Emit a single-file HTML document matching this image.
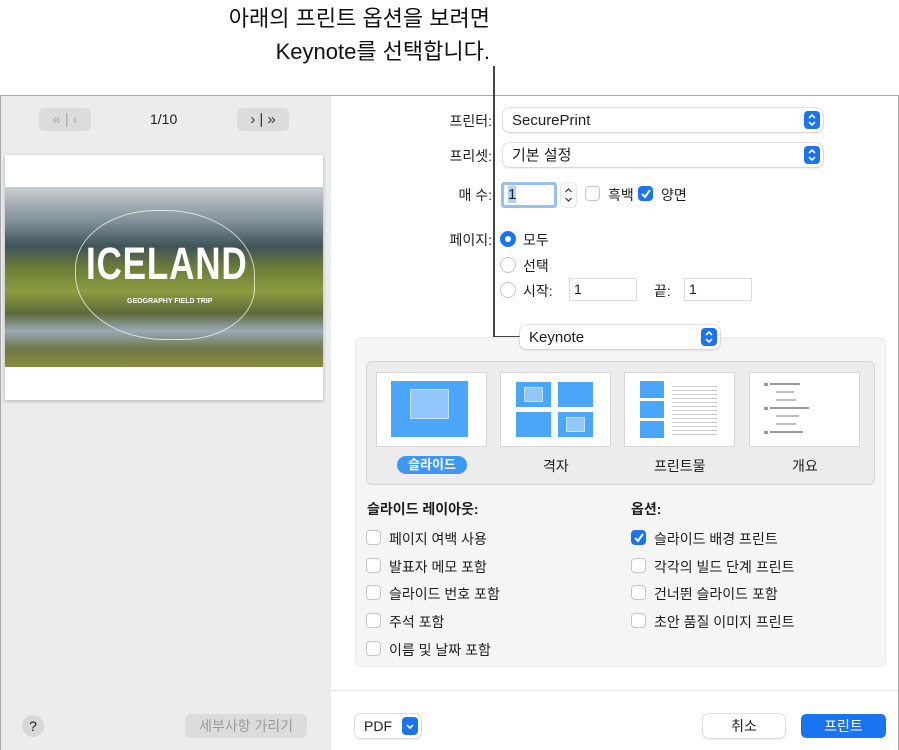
<!DOCTYPE html><html><head><meta charset="utf-8"><style>
*{box-sizing:border-box;margin:0;padding:0}
body{width:899px;height:750px;background:#fff;font-family:"Liberation Sans","Noto Sans CJK KR",sans-serif;color:#1d1d1d;position:relative;overflow:hidden;font-size:14px}
.a{position:absolute}
.lbl{position:absolute;font-size:14px;text-align:right}
.pop{position:absolute;background:#fff;border-radius:6px;box-shadow:0 0 0 0.5px #c8c8c8,0 1px 2px rgba(0,0,0,.15);font-size:15px;padding-left:9px;line-height:25px}
.arr{position:absolute;right:3px;top:3px;width:16px;height:18px;background:#1a73f0;border-radius:4px}
.arr svg{position:absolute;left:3px;top:2px}
.cb{position:absolute;width:15px;height:15px;border:1px solid #c5c5c5;border-radius:4px;background:#fff}
.cb.on{background:#1a73f0;border-color:#1a73f0}
.rd{position:absolute;width:16px;height:16px;border-radius:50%;border:1px solid #c5c5c5;background:#fff}
.t{position:absolute;font-size:14px;white-space:nowrap}
.thumb{position:absolute;top:373px;width:109px;height:73px;background:#fff;box-shadow:0 0 0 1px #d6d6d6}
.bl{position:absolute;background:#4aa6f8}
.lb{position:absolute;background:#93c7fb;border:1px solid #c4e1fd}
</style></head><body>
<div class="a" style="right:409px;top:2px;font-size:22px;text-align:right;line-height:33px;color:#111;white-space:nowrap">아래의 프린트 옵션을 보려면<br>Keynote를 선택합니다.</div>
<div class="a" style="left:0;top:95px;width:899px;height:655px;border:1px solid #a8a8a8;border-bottom:none"></div>
<div class="a" style="left:1px;top:96px;width:330px;height:654px;background:#ececec"></div>
<div class="a" style="left:39px;top:108px;width:52px;height:23px;background:#dcdcdc;border-radius:5px;color:#aaa;font-size:15px;line-height:23px;text-align:center">«&nbsp;|&nbsp;‹</div>
<div class="a" style="left:150px;top:111px;font-size:14px">1/10</div>
<div class="a" style="left:237px;top:108px;width:52px;height:23px;background:#dcdcdc;border-radius:5px;color:#333;font-size:15px;line-height:23px;text-align:center">›&nbsp;|&nbsp;»</div>
<div class="a" style="left:5px;top:155px;width:318px;height:245px;background:#fff;box-shadow:0 1px 4px rgba(0,0,0,.25)"></div>
<div class="a" style="left:5px;top:187px;width:318px;height:180px;background:linear-gradient(180deg,#c9ced1 0%,#7d8c95 20%,#3f5358 33%,#6c7d39 45%,#8b9c40 58%,#5e6a3a 70%,#9aa9b4 80%,#6e7748 90%,#8c8b3c 100%)"></div>
<div class="a" style="left:75px;top:210px;width:180px;height:130px;border:1px solid rgba(255,255,255,.7);border-radius:45% 50% 40% 50%"></div>
<div class="a" style="left:86px;top:238px;font-size:45px;font-weight:bold;color:#fff;letter-spacing:1px;transform:scaleX(.78);transform-origin:left;font-family:'Liberation Sans Narrow','Liberation Sans',sans-serif">ICELAND</div>
<div class="a" style="left:127px;top:298px;font-size:7px;font-weight:bold;color:#fff">GEOGRAPHY FIELD TRIP</div>
<div class="a" style="left:22px;top:715px;width:22px;height:22px;border-radius:50%;background:#d8d8d8;text-align:center;line-height:22px;font-size:14px">?</div>
<div class="a" style="left:185px;top:714px;width:122px;height:24px;background:#dcdcdc;border-radius:5px;color:#9a9a9a;text-align:center;line-height:24px;font-size:14px">세부사항 가리기</div>
<div class="a" style="left:493px;top:66px;width:2px;height:272px;background:#444"></div>
<div class="a" style="left:493px;top:336px;width:28px;height:2px;background:#444"></div>

<div class="lbl" style="left:420px;width:72px;top:111px">프린터:</div>
<div class="pop" style="left:503px;top:108px;width:320px;height:24px">SecurePrint<div class="arr"><svg width="10" height="14"><path d="M2 5l3-3 3 3M2 9l3 3 3-3" stroke="#fff" stroke-width="1.6" fill="none"/></svg></div></div>
<div class="lbl" style="left:420px;width:72px;top:146px">프리셋:</div>
<div class="pop" style="left:503px;top:143px;width:320px;height:24px">기본 설정<div class="arr"><svg width="10" height="14"><path d="M2 5l3-3 3 3M2 9l3 3 3-3" stroke="#fff" stroke-width="1.6" fill="none"/></svg></div></div>
<div class="lbl" style="left:420px;width:72px;top:185px">매 수:</div>
<div class="a" style="left:501px;top:182px;width:56px;height:26px;border:3px solid #93c0f5;border-radius:3px;background:#fff;font-size:15px;padding-left:4px;line-height:20px"><span style="background:#b3d4fb">1</span></div>
<div class="a" style="left:561px;top:183px;width:15px;height:24px;border-radius:4px;box-shadow:0 0 0 .5px #ccc"><svg width="15" height="24"><path d="M4.5 9l3-3 3 3M4.5 15l3 3 3-3" stroke="#333" stroke-width="1.2" fill="none"/></svg></div>
<div class="cb" style="left:585px;top:186px"></div><div class="t" style="left:608px;top:185px">흑백</div>
<div class="cb on" style="left:638px;top:186px"><svg width="14" height="14" style="position:absolute;left:0;top:0"><path d="M3 7l3 3 5-7" stroke="#fff" stroke-width="2" fill="none"/></svg></div><div class="t" style="left:661px;top:185px">양면</div>
<div class="lbl" style="left:420px;width:72px;top:230px">페이지:</div>
<div class="rd" style="left:500px;top:231px;border:5px solid #1a73f0"></div><div class="t" style="left:523px;top:230px">모두</div>
<div class="rd" style="left:500px;top:257px"></div><div class="t" style="left:523px;top:256px">선택</div>
<div class="rd" style="left:500px;top:282px"></div><div class="t" style="left:523px;top:281px">시작:</div>
<div class="a" style="left:569px;top:278px;width:68px;height:23px;border:1px solid #ddd;background:#fff;padding-left:4px;line-height:21px;font-size:14px">1</div>
<div class="t" style="left:654px;top:281px">끝:</div>
<div class="a" style="left:684px;top:278px;width:68px;height:23px;border:1px solid #ddd;background:#fff;padding-left:4px;line-height:21px;font-size:14px">1</div>

<div class="a" style="left:355px;top:337px;width:531px;height:330px;background:#f5f5f5;border-radius:6px;border:1px solid #ebebeb"></div>
<div class="pop" style="left:520px;top:325px;width:200px;height:24px;z-index:2">Keynote<div class="arr"><svg width="10" height="14"><path d="M2 5l3-3 3 3M2 9l3 3 3-3" stroke="#fff" stroke-width="1.6" fill="none"/></svg></div></div>
<div class="a" style="left:366px;top:361px;width:509px;height:124px;background:#ececec;border:1px solid #d6d6d6;border-radius:6px"></div>
<div class="thumb" style="left:377px"><div class="bl" style="left:14px;top:8px;width:77px;height:56px"></div><div class="lb" style="left:33px;top:16px;width:39px;height:30px"></div></div>
<div class="thumb" style="left:501px"><div class="bl" style="left:15px;top:9px;width:35px;height:25px"></div><div class="lb" style="left:23px;top:14px;width:19px;height:15px"></div><div class="bl" style="left:57px;top:9px;width:35px;height:25px"></div><div class="bl" style="left:15px;top:39px;width:35px;height:25px"></div><div class="bl" style="left:57px;top:39px;width:35px;height:25px"></div><div class="lb" style="left:65px;top:44px;width:19px;height:15px"></div></div>
<div class="thumb" style="left:625px"><div class="bl" style="left:15px;top:8px;width:24px;height:17px"></div><div class="bl" style="left:15px;top:28px;width:24px;height:17px"></div><div class="bl" style="left:15px;top:48px;width:24px;height:17px"></div><div class="a" style="left:47px;top:10px;width:45px;height:54px;background:repeating-linear-gradient(#fff 0,#fff 3px,#ccc 3px,#ccc 4px)"></div></div>
<div class="thumb" style="left:750px"><div class="a" style="left:14px;top:10px;width:4px;height:3px;background:#999"></div><div class="a" style="left:20px;top:10px;width:30px;height:2px;background:#999"></div><div class="a" style="left:26px;top:18px;width:18px;height:2px;background:#bbb"></div><div class="a" style="left:26px;top:26px;width:20px;height:2px;background:#bbb"></div><div class="a" style="left:14px;top:34px;width:4px;height:3px;background:#999"></div><div class="a" style="left:20px;top:34px;width:39px;height:2px;background:#999"></div><div class="a" style="left:26px;top:42px;width:23px;height:2px;background:#bbb"></div><div class="a" style="left:26px;top:50px;width:20px;height:2px;background:#bbb"></div><div class="a" style="left:14px;top:58px;width:4px;height:3px;background:#999"></div><div class="a" style="left:20px;top:58px;width:33px;height:2px;background:#999"></div></div>
<div class="a" style="left:397px;top:456px;width:70px;height:18px;background:#3d97f5;border-radius:9px;color:#fff;font-weight:bold;font-size:13px;text-align:center;line-height:18px">슬라이드</div>
<div class="t" style="left:543px;top:456px">격자</div>
<div class="t" style="left:654px;top:456px">프린트물</div>
<div class="t" style="left:792px;top:456px">개요</div>

<div class="t" style="left:367px;top:499px;font-weight:bold">슬라이드 레이아웃:</div>
<div class="t" style="left:631px;top:499px;font-weight:bold">옵션:</div>
<div class="cb" style="left:366px;top:530px"></div><div class="t" style="left:389px;top:529px">페이지 여백 사용</div>
<div class="cb" style="left:366px;top:558px"></div><div class="t" style="left:389px;top:557px">발표자 메모 포함</div>
<div class="cb" style="left:366px;top:585px"></div><div class="t" style="left:389px;top:584px">슬라이드 번호 포함</div>
<div class="cb" style="left:366px;top:613px"></div><div class="t" style="left:389px;top:612px">주석 포함</div>
<div class="cb" style="left:366px;top:641px"></div><div class="t" style="left:389px;top:640px">이름 및 날짜 포함</div>
<div class="cb on" style="left:631px;top:530px"><svg width="14" height="14" style="position:absolute;left:0;top:0"><path d="M3 7l3 3 5-7" stroke="#fff" stroke-width="2" fill="none"/></svg></div><div class="t" style="left:654px;top:529px">슬라이드 배경 프린트</div>
<div class="cb" style="left:631px;top:558px"></div><div class="t" style="left:654px;top:557px">각각의 빌드 단계 프린트</div>
<div class="cb" style="left:631px;top:585px"></div><div class="t" style="left:654px;top:584px">건너뛴 슬라이드 포함</div>
<div class="cb" style="left:631px;top:613px"></div><div class="t" style="left:654px;top:612px">초안 품질 이미지 프린트</div>

<div class="a" style="left:331px;top:690px;width:567px;height:1px;background:#e2e2e2"></div>
<div class="a" style="left:355px;top:714px;width:66px;height:24px;background:#fff;border-radius:5px;box-shadow:0 0 0 .5px #c8c8c8,0 1px 2px rgba(0,0,0,.15);font-size:14px;padding-left:9px;line-height:24px">PDF<div style="position:absolute;right:3px;top:3px;width:16px;height:18px;background:#1a73f0;border-radius:4px"><svg width="10" height="10" style="position:absolute;left:3px;top:5px"><path d="M2 3l3 3 3-3" stroke="#fff" stroke-width="1.6" fill="none"/></svg></div></div>
<div class="a" style="left:703px;top:714px;width:82px;height:24px;background:#fff;border-radius:5px;box-shadow:0 0 0 .5px #c8c8c8,0 1px 2px rgba(0,0,0,.15);text-align:center;line-height:24px;font-size:14px">취소</div>
<div class="a" style="left:801px;top:714px;width:85px;height:24px;background:#1a73f0;border-radius:5px;color:#fff;text-align:center;line-height:24px;font-size:14px">프린트</div>
</body></html>
